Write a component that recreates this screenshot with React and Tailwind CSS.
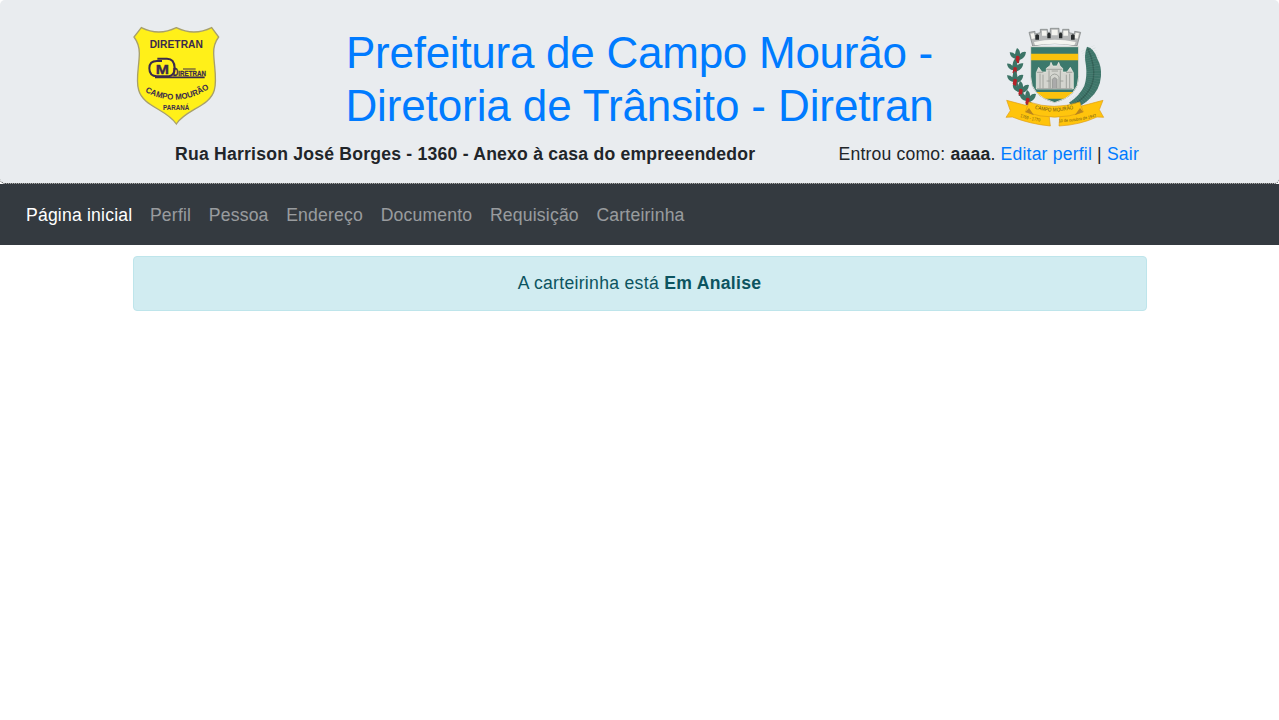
const links = ['Perfil', 'Pessoa', 'Endereço', 'Documento', 'Requisição', 'Carteirinha'];

function DiretranLogo() {
  return (
    <svg className="block h-[100px] w-[88px]" viewBox="24 18 264 300" fontFamily="Liberation Sans, sans-serif" fontWeight="700" fill="#3a2a4c">
      <defs>
        <path id="cityArc" d="M60 215 Q154 267 249 208" />
      </defs>
      <path d="M49 23 Q101 49 154 23 Q207 49 260 23 L281 51 Q265 72 266 100 C267 137 277 180 268 210 C255 260 182 268 154 312 C126 268 54 260 41 210 C31 180 43 137 43 100 Q43 72 27 51 Z" fill="#fff019" stroke="#a8a06b" strokeWidth="4" />
      <text x="74" y="83" fontSize="33" textLength="160" lengthAdjust="spacingAndGlyphs">DIRETRAN</text>
      <g fill="none" stroke="#3a2a4c" strokeWidth="6">
        <path d="M111 123 H96 Q73 123 73 145 Q73 169 96 169 H132 Q149 165 149 144 Q148 116 126 116 H97" />
        <path d="M90 172 H239" strokeWidth="5" />
      </g>
      <text x="92" y="161" fontSize="37" stroke="#3a2a4c" strokeWidth="1" textLength="40" lengthAdjust="spacingAndGlyphs">M</text>
      <text x="143" y="168" fontSize="30" stroke="#3a2a4c" strokeWidth=".8" textLength="100" lengthAdjust="spacingAndGlyphs">D<tspan fontSize="24">IRETRAN</tspan></text>
      <path d="M174 147 H212" stroke="#3a2a4c" strokeWidth="3" />
      <text fontSize="25"><textPath href="#cityArc" textLength="204" lengthAdjust="spacingAndGlyphs">CAMPO MOURÃO</textPath></text>
      <text x="114" y="270" fontSize="20" textLength="79" lengthAdjust="spacingAndGlyphs">PARANÁ</text>
    </svg>
  );
}

const leaves = [[52, 111], [44, 145], [44, 180], [61, 210], [82, 237]];

function CityArms() {
  return (
    <svg className="block h-[102px] w-[100px]" viewBox="15 18 300 306" fontFamily="Liberation Sans, sans-serif">
      <defs>
        <clipPath id="armsShield"><path d="M92 80 H236 V170 Q236 228 164 248 Q92 228 92 170 Z" /></clipPath>
        <path id="leftRibbon" d="M60 291 Q88 301 122 305" />
        <path id="midRibbon" d="M104 266 Q161 283 221 266" />
        <path id="rightRibbon" d="M176 307 Q237 305 293 289" />
      </defs>
      <path d="M87 37 L105 34 V42 L121 38 V28 H142 V37 H151 V25 H177 V37 H188 V28 H207 V38 L224 42 V34 L242 37 L231 78 Q164 63 98 78 Z" fill="#b6b8b8" stroke="#777b7c" strokeWidth="2" />
      <g fill="#f4f4ef">
        <path d="M92 41 l10-2 l3 16 l-10 2 Z M126 32 h14 v15 h-14 Z M155 29 h18 v17 h-18 Z M190 32 h14 v15 h-14 Z M227 38 l10 2 l-4 16 l-10-2 Z" />
        <path d="M102 66 Q164 52 227 66 L223 76 Q164 66 105 76 Z" />
      </g>
      <g fill="#292d2e">
        <path d="M106 46 q6-6 11 0 v13 h-11 Z M142 41 q5-6 10 0 v14 h-10 Z M177 41 q5-6 10 0 v14 h-10 Z M213 46 q6-6 11 0 v13 h-11 Z" />
      </g>
      <g clipPath="url(#armsShield)">
        <path d="M90 70 H240 V250 H90 Z" fill="#3c796c" />
        <path d="M90 101 H240 V121 H90 Z M90 216 H240 V236 H90 Z" fill="#fac20c" />
      </g>
      <path d="M92 80 H236 V170 Q236 228 164 248 Q92 228 92 170 Z" fill="none" stroke="#d8d9d3" strokeWidth="3" />
      <path d="M109 207 V158 L116 142 L126 156 H139 V145 L150 137 L153 127 L158 138 H171 L176 127 L180 138 L188 145 V156 H201 L211 142 L220 158 V207 Z" fill="#d4d5cf" stroke="#f4f2e9" strokeWidth="2" />
      <g fill="none" stroke="#888d87" strokeWidth="2">
        <path d="M111 157 H130 M139 148 H187 M198 157 H217 M120 161 V205 M129 164 V205 M147 151 V205 M181 151 V205 M199 164 V205 M209 161 V205 M111 206 H217" />
        <path d="M151 205 V170 Q164 154 177 170 V205 M155 153 H174 M140 183 H149 M181 183 H190" />
        <path d="M157 205 V178 Q164 168 171 178 V205" fill="#aaa" />
      </g>
      <path d="M52 103 Q38 145 46 180 Q55 216 102 261" fill="none" stroke="#3e7567" strokeWidth="7" />
      {leaves.map(([x, y]) => (
        <g key={y} transform={`translate(${x} ${y})`}>
          <path d="M-3 6 Q-21 4 -23 -14 Q-13 -15 -7 -8 Q-5 -20 -1 -27 Q9 -21 8 -9 Q15 -17 26 -15 Q24 3 7 9 L5 18 H-5 Z" fill="#3c7466" />
          <path d="M-3 -3 Q3 -6 7 0 L4 19 Q-4 18 -6 12 Z" fill="#b52228" />
        </g>
      ))}
      <path d="M261 80 Q282 84 292 116 Q305 139 303 168 Q300 211 268 237 Q249 257 222 264 L207 248 Q240 226 253 197 Q262 170 258 137 Q251 104 261 80 Z" fill="#3d7569" />
      <path d="M263 85 Q286 134 280 177 Q270 228 214 257" stroke="#315f55" strokeWidth="4" fill="none" />
      <path d="M263 85 Q286 134 280 177 Q270 228 214 257" stroke="#9bb2ae" strokeWidth="44" strokeDasharray="1 6" opacity=".35" fill="none" />
      <path d="M20 241 L88 259 L87 276 L147 283 L151 318 Q89 312 37 291 L18 292 L31 272 Z M309 241 L241 259 L242 276 L180 283 L177 318 Q239 315 291 291 L311 292 L298 269 Z" fill="#ffc40c" stroke="#df9d16" strokeWidth="2" />
      <path d="M87 246 Q162 272 239 246 L250 276 Q165 307 76 276 Z" fill="#ffc50d" stroke="#d89c19" strokeWidth="2" />
      <path d="M76 276 L102 286 L87 264 Z M250 276 L224 286 L240 264 Z" fill="#b9861d" />
      <g fill="#6b5513">
        <text fontSize="16"><textPath href="#midRibbon" textLength="118" lengthAdjust="spacingAndGlyphs">CAMPO MOURÃO</textPath></text>
        <text fontSize="14"><textPath href="#leftRibbon" textLength="62" lengthAdjust="spacingAndGlyphs">1769 - 1770</textPath></text>
        <text fontSize="13"><textPath href="#rightRibbon" textLength="115" lengthAdjust="spacingAndGlyphs">10 de outubro de 1947</textPath></text>
      </g>
    </svg>
  );
}

export default function App() {
  return (
    <div className="min-h-screen bg-white font-['Liberation_Sans',Arial,sans-serif] text-[17.6px] leading-[26.4px] tracking-[0.19px] text-[#212529]">
      <header className="h-[184px] rounded-[5px] border-b border-dotted border-black bg-[#e9ecef] pt-[26px]">
        <div className="mx-auto flex h-[115px] w-[1014px] items-start">
          <div className="w-[193px]"><DiretranLogo /></div>
          <h1 className="w-[628px] text-center text-[44px] leading-[53px] text-[#007bff]">
            <a href="#"><span className="tracking-[-0.26px]">Prefeitura de Campo Mourão -</span><br /><span className="tracking-[-0.11px]">Diretoria de Trânsito - Diretran</span></a>
          </h1>
          <div className="pl-[51px]"><CityArms /></div>
        </div>
        <div className="flex items-start justify-between pr-[140px] pl-[175px]">
          <strong className="tracking-[0.22px]">Rua Harrison José Borges - 1360 - Anexo à casa do empreeendedor</strong>
          <div>Entrou como: <strong>aaaa</strong>. <a href="#" className="text-[#007bff]">Editar perfil</a> | <a href="#" className="text-[#007bff]">Sair</a></div>
        </div>
      </header>
      <nav className="flex h-[61px] items-center gap-[17.6px] bg-[#343a40] px-[26px] pt-0.5">
        <a href="#" className="text-white">Página inicial</a>
        {links.map((label) => <a href="#" className="text-white/50" key={label}>{label}</a>)}
      </nav>
      <main className="mx-auto mt-[11px] flex h-[55px] w-[1014px] items-center justify-center rounded-[4px] border border-[#bee5eb] bg-[#d1ecf1] text-[#0c5460]">
        <p className="tracking-[0.3px]">A carteirinha está <strong>Em Analise</strong></p>
      </main>
    </div>
  );
}
